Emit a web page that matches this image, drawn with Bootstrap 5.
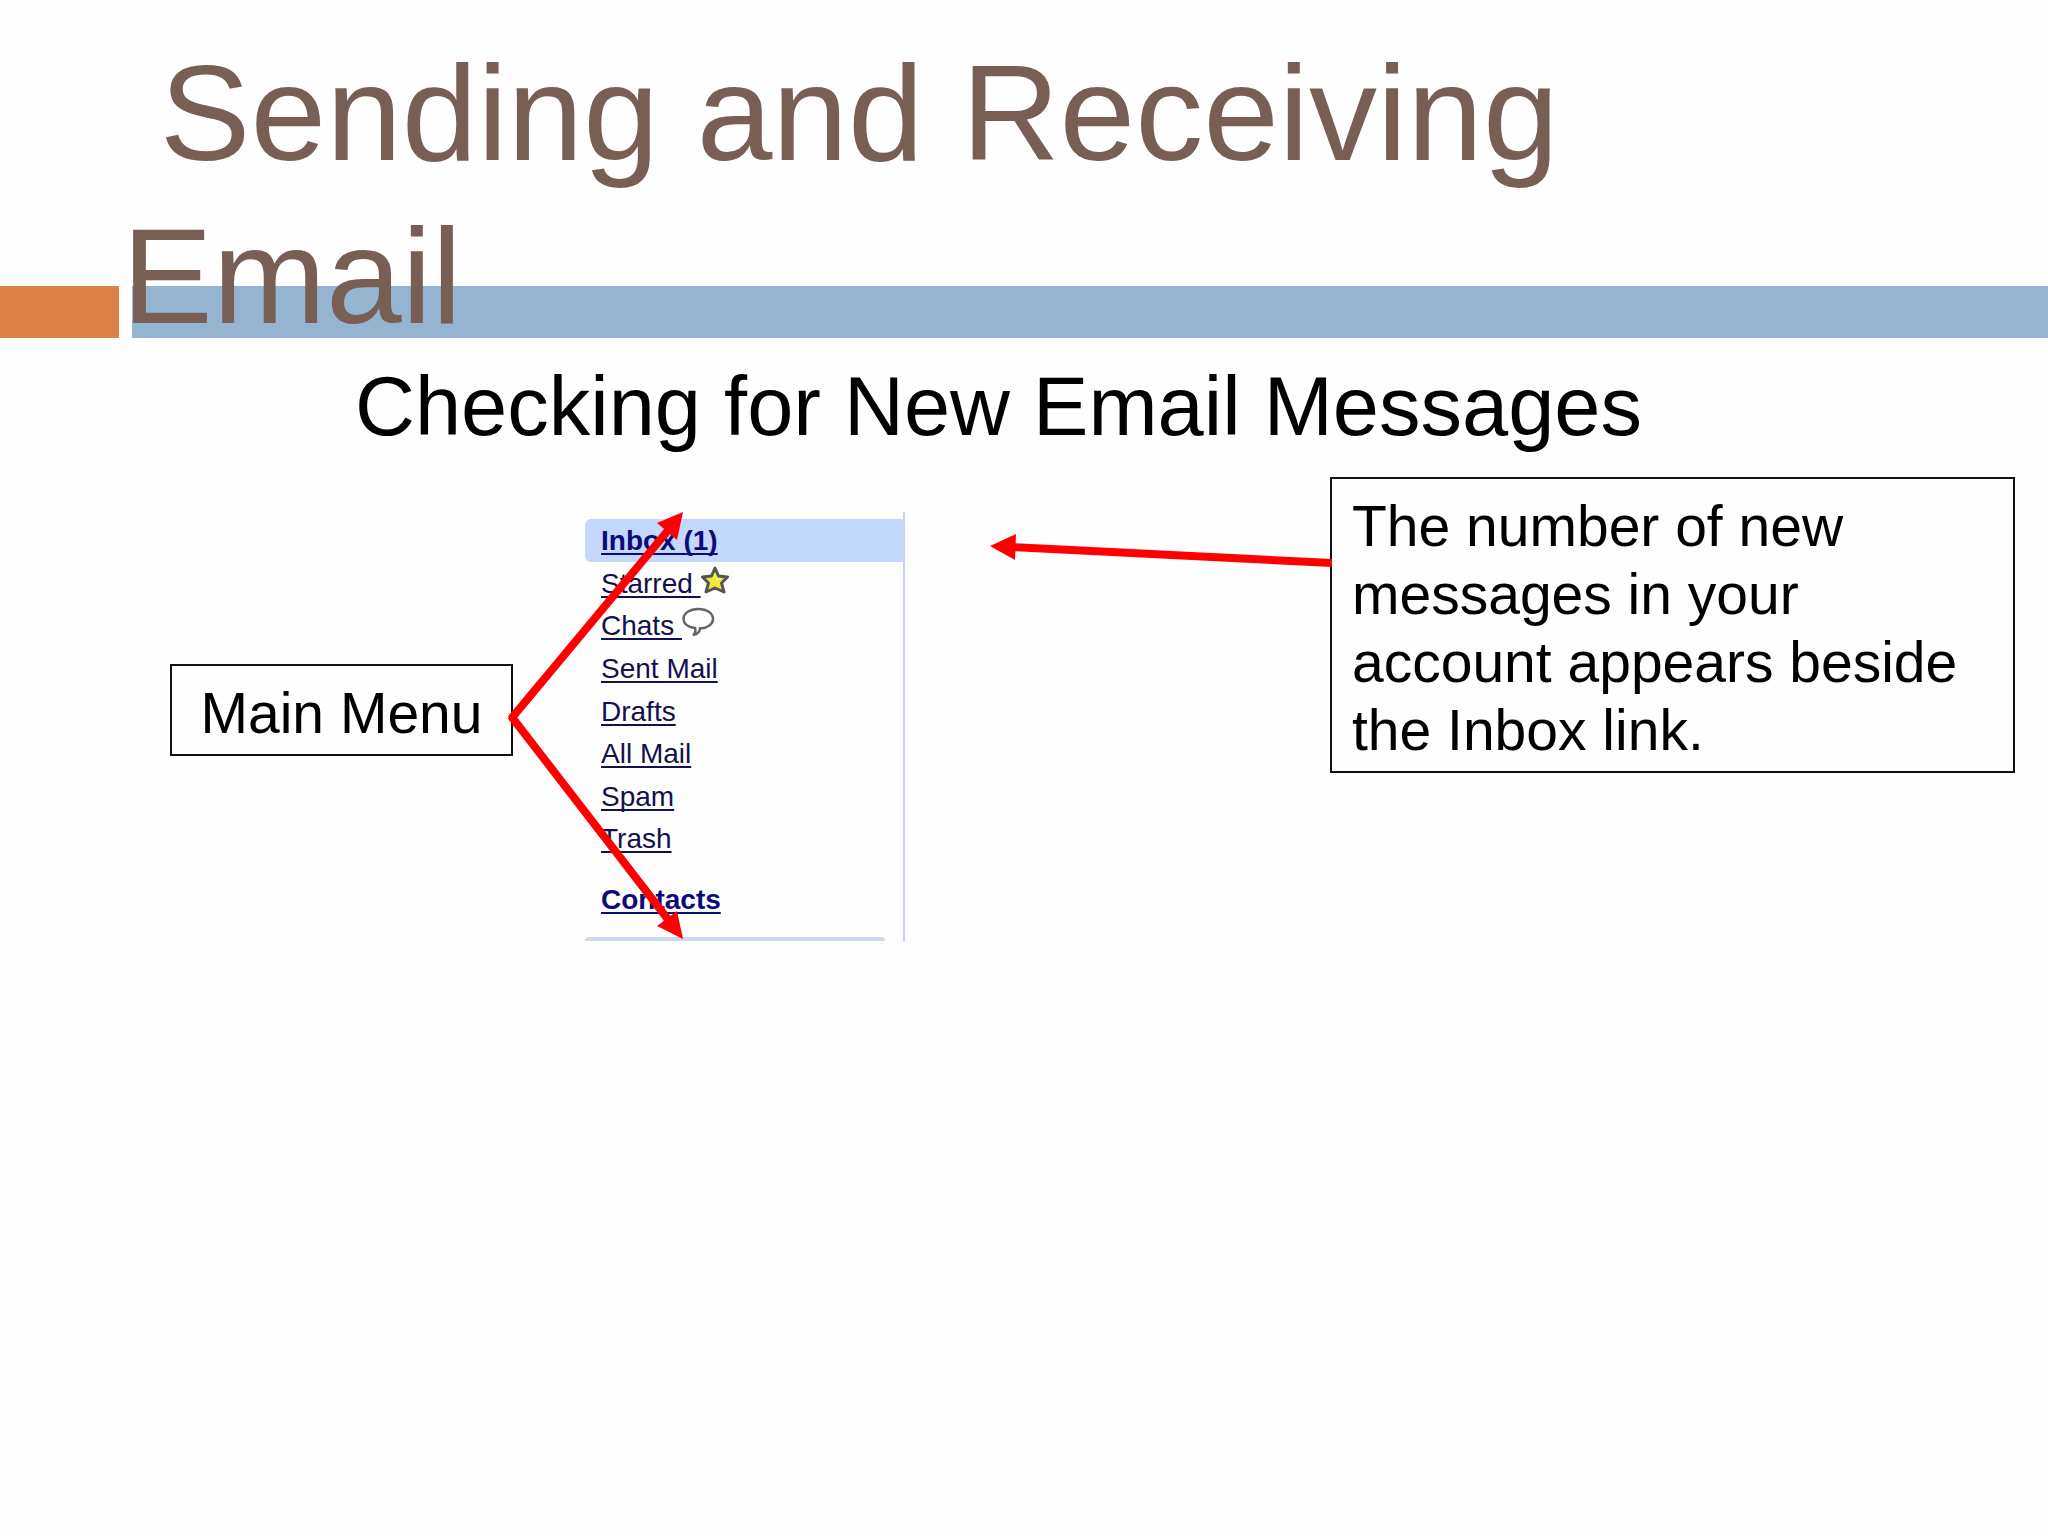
<!DOCTYPE html>
<html lang="en">
<head>
<meta charset="utf-8">
<meta name="viewport" content="width=device-width, initial-scale=1">
<title>Sending and Receiving Email</title>
<link href="https://cdn.jsdelivr.net/npm/bootstrap@5.3.0/dist/css/bootstrap.min.css" rel="stylesheet">
<style>
  body { font-family: "Liberation Sans", Arial, sans-serif; background: #fefefe; color: #000; }
  /* the title overlaps the coloured band: both share one grid cell */
  .slide-head > * { grid-area: 1 / 1; }
  .band { gap: 13px; height: 52px; margin-bottom: 20px; }
  .band-start { width: 119px; background: #dd8047; }
  .band-rest { background: #94b4d0; }
  .slide-title { font-size: 136px; line-height: 163px; color: #775f55; padding: 32px 0 0 122px; max-width: 1700px; }
  .slide-sub { font-size: 83px; line-height: 90px; padding: 4px 0 0 355px; }
  .note { border: 2px solid #111; padding: 13px 20px 7px; font-size: 57px; line-height: 68px; background: #fefefe; }
  .note-menu { width: 343px; margin: 212px 72px 0 170px; }
  .note-inbox { width: 685px; margin: 25px 33px 0 auto; }
  .mailbox { width: 320px; height: 429px; margin-top: 60px; padding-top: 7px; border-right: 2px solid #c9d5e6; font-size: 28px; line-height: 40px; }
  .mailbox ul { height: 341px; }
  .mailbox li { padding: 2px 0 0 16px; }
  .mailbox a { color: #14104f; text-decoration: underline; text-decoration-thickness: 2px; text-underline-offset: 3px; text-decoration-skip-ink: none; }
  .mailbox .current { background: #c4d7fc; border-radius: 6px 0 0 6px; }
  .mailbox .strong-link { color: #0b0b7a; font-weight: 700; }
  .contacts { padding: 20px 0 0 16px; }
  .mailbox-end { height: 4px; width: 300px; background: #c9d8ea; border-radius: 4px 4px 0 0; }
  .mailbox svg { display: block; }
  .arrows { left: 0; top: 0; pointer-events: none; }
  .arrow-inbox { right: 100%; top: 50px; pointer-events: none; }
</style>
<script src="https://cdn.jsdelivr.net/npm/bootstrap@5.3.0/dist/js/bootstrap.bundle.min.js"></script>
</head>
<body>
<header class="slide-head d-grid">
  <div class="band d-flex align-self-end">
    <div class="band-start"></div>
    <div class="band-rest flex-grow-1"></div>
  </div>
  <h1 class="slide-title fw-normal mb-0">&nbsp;Sending and Receiving Email</h1>
</header>
<main>
  <h2 class="slide-sub fw-normal mb-0">Checking for New Email Messages</h2>
  <div class="position-relative d-flex align-items-start">
    <div class="note note-menu text-center text-nowrap flex-shrink-0">Main Menu</div>

    <nav class="mailbox d-flex flex-column flex-shrink-0" aria-label="Mail folders">
      <ul class="list-unstyled d-flex flex-column mb-0">
        <li class="current flex-fill"><a class="strong-link" href="#">Inbox (1)</a></li>
        <li class="flex-fill d-flex"><a href="#">Starred&nbsp;</a>
          <svg width="28" height="32" viewBox="0 0 28 32" aria-hidden="true"><path d="M14 4 L17.500 12 L26.500 13 L20.500 19 L23 28 L14 24 L5 28 L7.500 19 L1.500 13 L10.500 12 Z" fill="#f1ea2f" stroke="#55535c" stroke-width="3" stroke-linejoin="round"/><path d="M14 9 L16 14 L21 15 L15 17 Z" fill="#fbf9a0"/></svg>
        </li>
        <li class="flex-fill d-flex"><a href="#">Chats&nbsp;</a>
          <svg width="34" height="32" viewBox="0 0 34 32" aria-hidden="true"><path d="M13 22 C5 21 1.500 17 1.500 13 C1.500 7 8 3 16 3 C25 3 31 7 31 13 C31 18 26 22 18 22.500 C18 25 16 28 11 29 C13.500 27 14 25 13 22 Z" fill="#fefefe" stroke="#6a6464" stroke-width="2.500"/></svg>
        </li>
        <li class="flex-fill"><a href="#">Sent Mail</a></li>
        <li class="flex-fill"><a href="#">Drafts</a></li>
        <li class="flex-fill"><a href="#">All Mail</a></li>
        <li class="flex-fill"><a href="#">Spam</a></li>
        <li class="flex-fill"><a href="#">Trash</a></li>
      </ul>
      <div class="contacts"><a class="strong-link" href="#">Contacts</a></div>
      <div class="mailbox-end mt-auto"></div>
    </nav>

    <div class="note note-inbox position-relative">The number of new messages in your account appears beside the Inbox link.
      <svg class="arrow-inbox position-absolute" width="342" height="60" viewBox="0 0 342 60" aria-hidden="true">
        <path d="M20 18 L342 34" stroke="#f00" stroke-width="8" fill="none"/>
        <path d="M0 17 L26 5 L25 31 Z" fill="#f00"/>
      </svg>
    </div>

    <!-- the span of the main menu -->
    <svg class="arrows position-absolute" width="700" height="500" viewBox="0 0 700 500" aria-hidden="true">
      <path d="M511 267 L670 76 M511 264 L670 470" stroke="#f00" stroke-width="8" fill="none"/>
      <path d="M683 60 L657 71 L677 88 Z M683 487 L657 474 L677 459 Z" fill="#f00"/>
    </svg>
  </div>
</main>
</body>
</html>
